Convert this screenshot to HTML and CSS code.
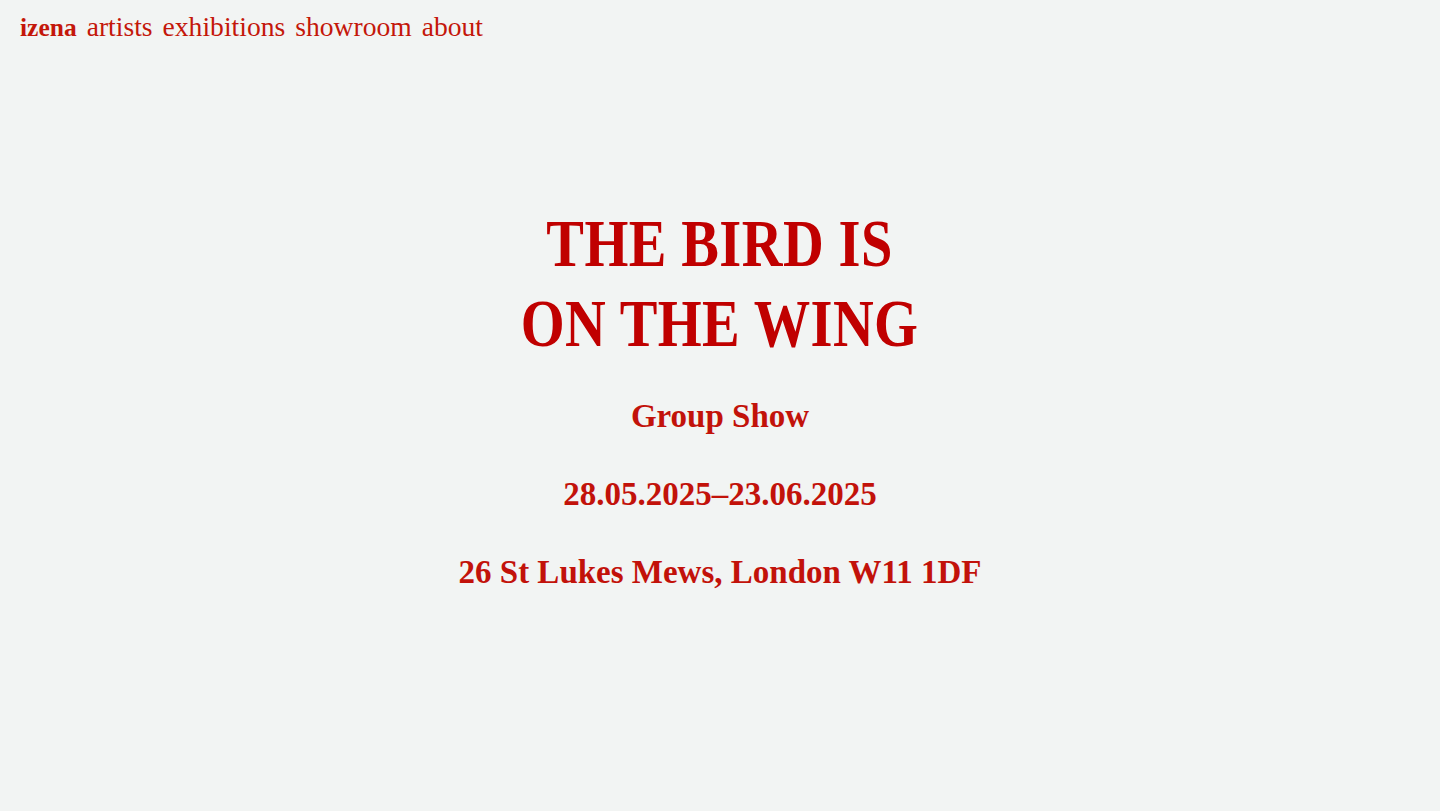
FILE: index.html
```html
<!DOCTYPE html>
<html lang="en">
<head>
<meta charset="utf-8">
<title>izena</title>
<link rel="stylesheet" href="styles.css">
</head>
<body>
<nav class="nav">
  <a class="nav-link brand" href="#">izena</a>
  <a class="nav-link" href="#">artists</a>
  <a class="nav-link" href="#">exhibitions</a>
  <a class="nav-link" href="#">showroom</a>
  <a class="nav-link" href="#">about</a>
</nav>
<main class="hero">
  <h1 class="title"><span class="title-line">THE BIRD IS</span><span class="title-line">ON THE WING</span></h1>
  <p class="sub">Group Show</p>
  <p class="sub">28.05.2025–23.06.2025</p>
  <p class="sub">26 St Lukes Mews, London W11 1DF</p>
</main>
</body>
</html>
```

FILE: styles.css
```css
html, body {
  margin: 0;
  padding: 0;
  background: #f2f4f3;
}
body {
  font-family: "Liberation Serif", "Times New Roman", serif;
  color: #c00000;
  min-height: 811px;
}
.nav {
  display: flex;
  align-items: baseline;
  gap: 10px;
  padding: 11px 0 0 20px;
  font-size: 27.6px;
  line-height: 31px;
}
.nav-link {
  color: #c4170a;
  text-decoration: none;
}
.brand {
  font-weight: bold;
  font-size: 25.5px;
}
.hero {
  display: flex;
  flex-direction: column;
  align-items: center;
  padding-top: 160px;
}
.title {
  margin: 0 0 33px;
  font-size: 68px;
  line-height: 80px;
  font-weight: bold;
  color: #c00000;
  display: flex;
  flex-direction: column;
  align-items: center;
  letter-spacing: 0.5px;
  transform: scaleX(0.83);
}
.title-line {
  display: block;
  white-space: nowrap;
}
.sub {
  margin: 0 0 38px;
  font-size: 33px;
  line-height: 40px;
  font-weight: bold;
  color: #c2120a;
}
```
